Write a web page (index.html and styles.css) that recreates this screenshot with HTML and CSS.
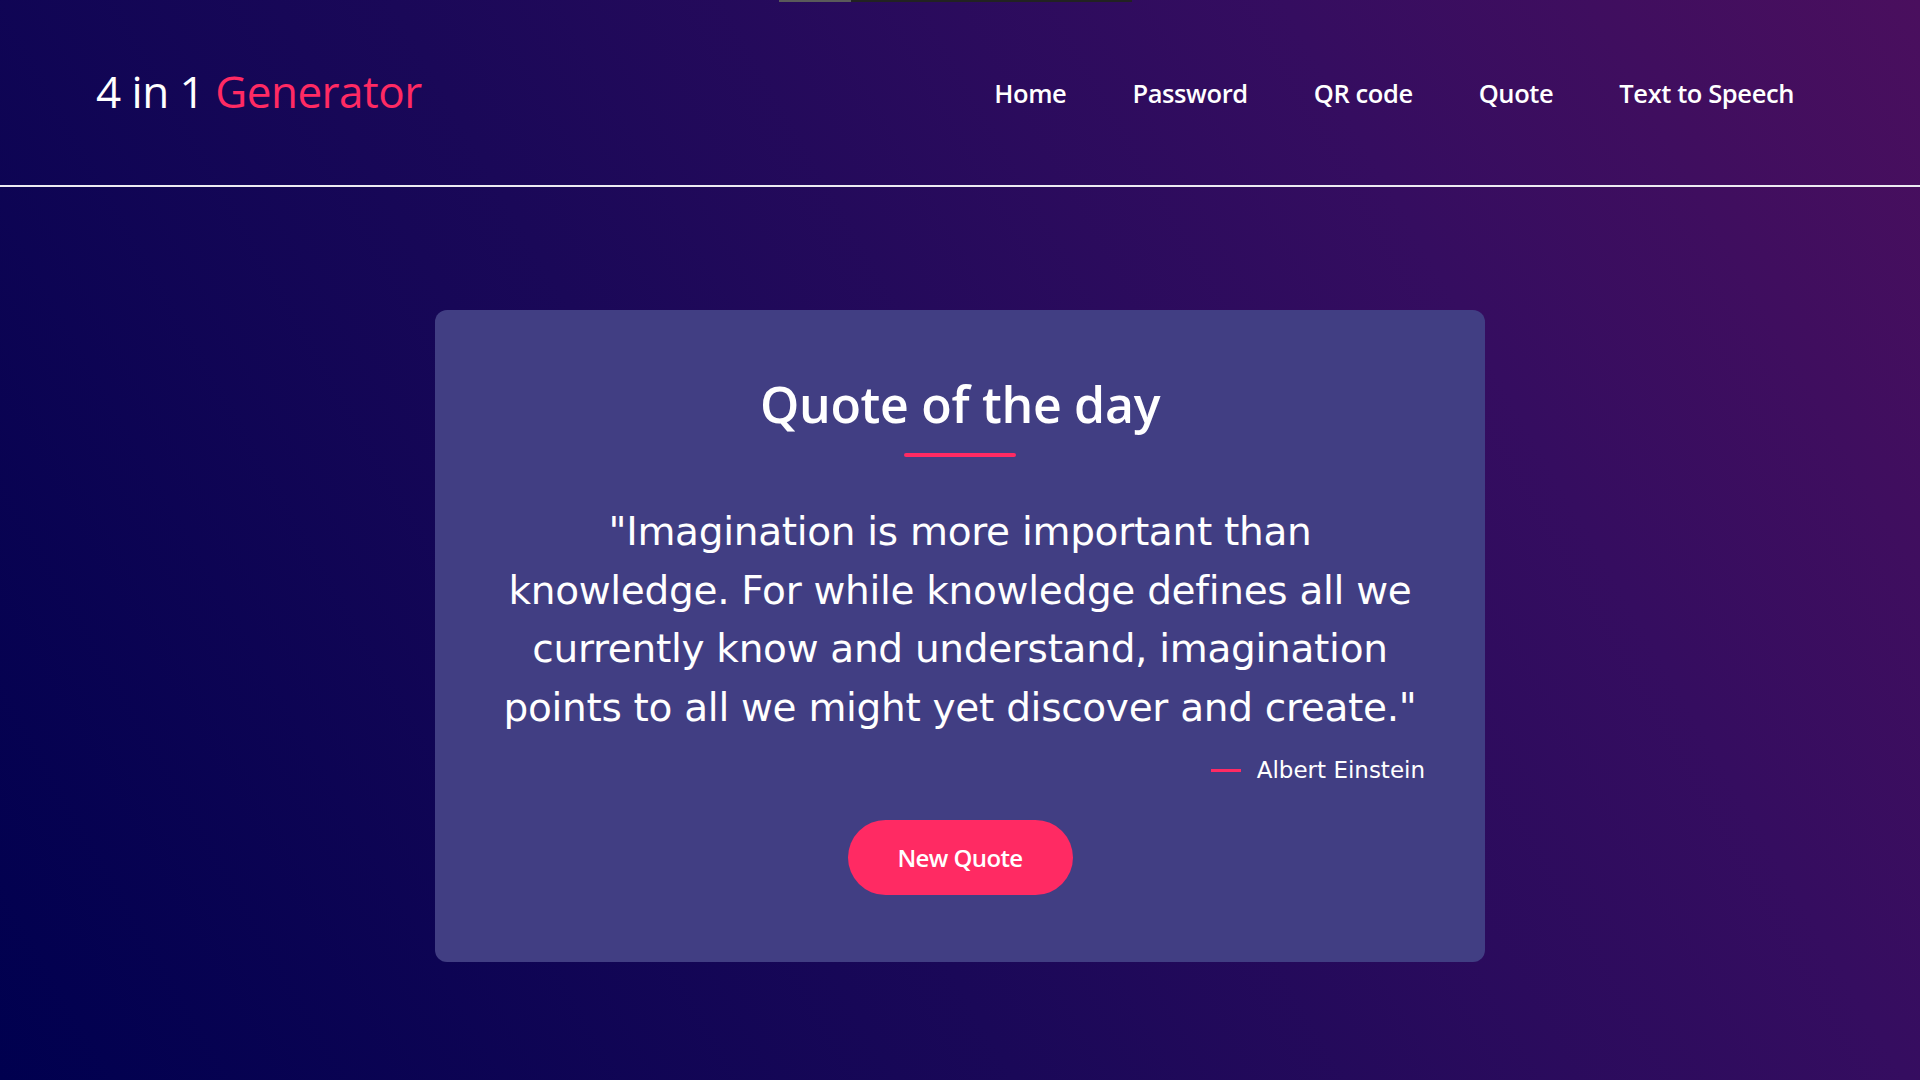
FILE: index.html
```html
<!DOCTYPE html>
<html lang="en">
<head>
<meta charset="utf-8">
<title>4 in 1 Generator - Quote</title>
<link rel="stylesheet" href="styles.css">
</head>
<body>
<div class="topbar"><span class="topbar-thumb"></span></div>
<header class="header">
  <a class="logo" href="#">4 in 1 <span class="logo-accent">Generator</span></a>
  <nav class="nav">
    <a href="#">Home</a>
    <a href="#">Password</a>
    <a href="#">QR code</a>
    <a href="#">Quote</a>
    <a href="#">Text to Speech</a>
  </nav>
</header>
<main class="main">
  <section class="card">
    <h1 class="title">Quote of the day</h1>
    <div class="title-line"></div>
    <p class="quote">"Imagination is more important than knowledge. For while knowledge defines all we currently know and understand, imagination points to all we might yet discover and create."</p>
    <div class="author"><span class="author-dash"></span><span>Albert Einstein</span></div>
    <button class="btn" type="button">New Quote</button>
  </section>
</main>
</body>
</html>
```

FILE: styles.css
```css
* { box-sizing: border-box; }
html, body { height: 100%; }
body {
  margin: 0;
  min-height: 100vh;
  font-family: "Open Sans", "Noto Sans", sans-serif;
  color: #fff;
  background: linear-gradient(60deg, #00004f 0%, #1a0858 40%, #350d60 75%, #4a0f5e 100%);
  position: relative;
  overflow: hidden;
}
.topbar {
  position: absolute;
  top: 0;
  left: 779px;
  width: 353px;
  height: 2px;
  background: #222;
}
.topbar-thumb {
  display: block;
  width: 72px;
  height: 2px;
  background: #5a5a5a;
}
.header {
  height: 187px;
  display: flex;
  align-items: center;
  justify-content: space-between;
  padding: 0 126px 0 96px;
  border-bottom: 2px solid #ecebf2;
}
.logo {
  font-size: 44px;
  font-weight: 500;
  color: #fff;
  text-decoration: none;
  letter-spacing: -0.5px;
  margin-bottom: 4px;
}
.logo-accent { color: #ff2a63; }
.nav { display: flex; gap: 66px; }
.nav a {
  color: #fff;
  text-decoration: none;
  font-size: 25.5px;
  font-weight: 600;
  letter-spacing: -0.4px;
}
.main {
  display: flex;
  justify-content: center;
  padding-top: 123px;
}
.card {
  width: 1050px;
  background: #413e83;
  border-radius: 12px;
  padding: 64px 60px 67px;
  display: flex;
  flex-direction: column;
  align-items: center;
}
.title {
  margin: 0;
  font-size: 50px;
  font-weight: 600;
  line-height: 60px;
  letter-spacing: -0.3px;
}
.title-line {
  width: 112px;
  height: 4px;
  border-radius: 2px;
  background: #ff2a63;
  margin-top: 19px;
}
.quote {
  margin: 46px 0 0;
  font-family: "DejaVu Sans", "Open Sans", sans-serif;
  font-size: 39px;
  line-height: 58.5px;
  text-align: center;
  font-weight: 400;
  letter-spacing: -0.3px;
}
.author {
  align-self: flex-end;
  display: flex;
  align-items: center;
  gap: 16px;
  font-family: "DejaVu Sans", "Open Sans", sans-serif;
  font-size: 23px;
  margin-top: 20px;
}
.author-dash {
  width: 30px;
  height: 3px;
  background: #ff2a63;
}
.btn {
  margin-top: 37px;
  height: 75px;
  width: 225px;
  border: none;
  border-radius: 38px;
  background: #ff2a63;
  color: #fff;
  font-family: inherit;
  font-size: 24px;
  font-weight: 600;
  letter-spacing: -0.6px;
  cursor: pointer;
}
```
